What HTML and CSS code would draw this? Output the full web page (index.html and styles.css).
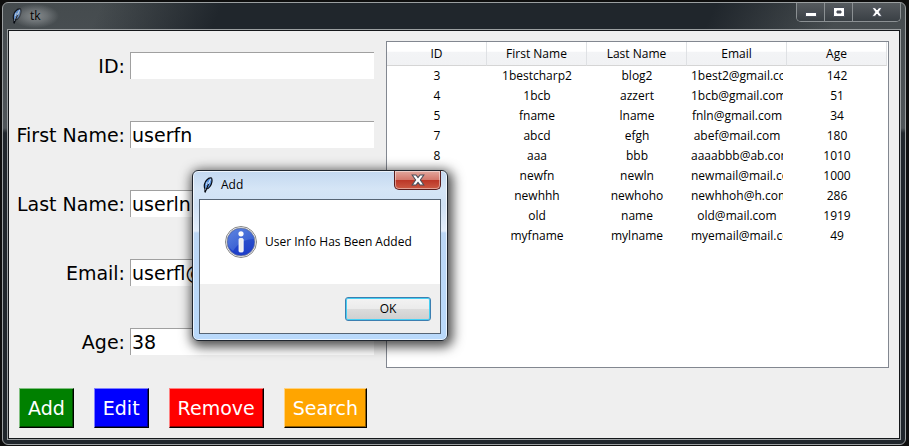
FILE: index.html
```html
<!DOCTYPE html>
<html lang="en">
<head>
<meta charset="utf-8">
<title>tk</title>
<link rel="stylesheet" href="styles.css">
</head>
<body>
<svg width="0" height="0" class="defs" aria-hidden="true">
  <defs>
    <linearGradient id="ball" x1="0" y1="0" x2="0" y2="1"><stop offset="0" stop-color="#2f58cc"/><stop offset="1" stop-color="#1c3cc8"/></linearGradient>
    <linearGradient id="gloss" x1="0" y1="0" x2="1" y2="1"><stop offset="0" stop-color="#7fa4ee"/><stop offset="1" stop-color="#2f5ad0"/></linearGradient>
    <symbol id="feather" viewBox="0 0 16 16">
      <path d="M5 15 5 12C3.500 9 4.500 5 7 2.800 8 1.500 10 .6 11.500 1 12.600 3 11.800 7 10 9.500 9 11 7.500 12 6 12Z" fill="#5b93dc" stroke="#0a0d14" stroke-width="1.200"/>
      <path d="M10.800 1.800 5.300 13M9.800 3.500 9 6M6.500 8 7 5" stroke="#cfe2fb" stroke-width=".9" fill="none"/>
      <path d="M8.500 7 5 15.500" stroke="#0a0d14" stroke-width="1.200"/>
    </symbol>
    <symbol id="cross" viewBox="0 0 12 10">
      <path d="M1 .7H4.200L6 3 7.800.7H11L8 5 11 9.300H7.800L6 7 4.200 9.300H1L4 5Z" fill="#fff" stroke="#4a4f5a" stroke-width=".9"/>
    </symbol>
  </defs>
</svg>
<main class="window">
  <header class="titlebar">
    <svg class="feather" aria-hidden="true"><use href="#feather"/></svg>
    <h1 class="title">tk</h1>
    <div class="caption">
      <button type="button" class="cap" aria-label="Minimize"><svg width="12" height="10" viewBox="0 0 12 10"><rect x=".5" y="5.500" width="11" height="4" fill="#fff" stroke="#4a4f5a"/></svg></button>
      <button type="button" class="cap" aria-label="Maximize"><svg width="12" height="10" viewBox="0 0 12 10"><path d="M.5.5H11.500V9.500H.5ZM4 4V6H8V4Z" fill="#fff" fill-rule="evenodd" stroke="#4a4f5a"/></svg></button>
      <button type="button" class="cap cap-close" aria-label="Close"><svg width="12" height="10"><use href="#cross"/></svg></button>
    </div>
  </header>
  <div class="client">
    <form class="form">
      <div class="fields">
        <label for="id">ID:</label><input id="id" type="text">
        <label for="fn">First Name:</label><input id="fn" type="text" value="userfn">
        <label for="ln">Last Name:</label><input id="ln" type="text" value="userln">
        <label for="email">Email:</label><input id="email" type="text" value="userfl@">
        <label for="age">Age:</label><input id="age" type="text" value="38">
      </div>
      <div class="actions">
        <button type="button" class="btn add">Add</button>
        <button type="button" class="btn edit">Edit</button>
        <button type="button" class="btn remove">Remove</button>
        <button type="button" class="btn search">Search</button>
      </div>
    </form>
    <div class="tree">
      <table>
        <thead><tr><th>ID</th><th>First Name</th><th>Last Name</th><th>Email</th><th>Age</th></tr></thead>
        <tbody>
          <tr><td>3</td><td>1bestcharp2</td><td>blog2</td><td><div class="clip">1best2@gmail.com</div></td><td>142</td></tr>
          <tr><td>4</td><td>1bcb</td><td>azzert</td><td><div class="clip">1bcb@gmail.com</div></td><td>51</td></tr>
          <tr><td>5</td><td>fname</td><td>lname</td><td><div class="clip">fnln@gmail.com</div></td><td>34</td></tr>
          <tr><td>7</td><td>abcd</td><td>efgh</td><td><div class="clip">abef@mail.com</div></td><td>180</td></tr>
          <tr><td>8</td><td>aaa</td><td>bbb</td><td><div class="clip">aaaabbb@ab.com</div></td><td>1010</td></tr>
          <tr><td></td><td>newfn</td><td>newln</td><td><div class="clip">newmail@mail.com</div></td><td>1000</td></tr>
          <tr><td></td><td>newhhh</td><td>newhoho</td><td><div class="clip">newhhoh@h.com</div></td><td>286</td></tr>
          <tr><td></td><td>old</td><td>name</td><td><div class="clip">old@mail.com</div></td><td>1919</td></tr>
          <tr><td></td><td>myfname</td><td>mylname</td><td><div class="clip">myemail@mail.com</div></td><td>49</td></tr>
        </tbody>
      </table>
    </div>
  </div>
</main>
<section class="dialog" role="dialog" aria-labelledby="dlg-title">
  <header class="dialog-bar">
    <svg class="feather" aria-hidden="true"><use href="#feather"/></svg>
    <h2 class="title" id="dlg-title">Add</h2>
    <button type="button" class="dialog-close" aria-label="Close dialog"><svg width="14" height="12"><use href="#cross"/></svg></button>
  </header>
  <div class="dialog-client">
    <div class="message">
      <svg width="32" height="32" viewBox="0 0 32 32" aria-hidden="true">
        <circle cx="16" cy="16" r="15.500" fill="#fff" stroke="#858585"/>
        <circle cx="16" cy="16" r="14" fill="url(#ball)" stroke="#8d8f98" stroke-width=".8"/>
        <path d="M2.800 17A13.300 13.300 0 0 1 29 13C20 13 13 17 8 25 5 23 3 20 2.800 17Z" fill="url(#gloss)" opacity=".6"/>
        <circle cx="16" cy="7.800" r="2.600" fill="#fff"/>
        <rect x="14" y="12.500" width="4.200" height="13.500" rx="1" fill="#ededed" stroke="#fff" stroke-width=".8"/>
      </svg>
      <p>User Info Has Been Added</p>
    </div>
    <div class="dialog-foot"><button type="button" class="ok">OK</button></div>
  </div>
</section>
</body>
</html>
```
FILE: styles.css
```css
* { box-sizing: border-box; }
body {
  margin: 0;
  min-height: 100vh;
  padding: 2px 3px 1px 2px;
  display: flex;
  background: #0e0e0e;
  color: #000;
  font: 12px/16px "Open Sans", "Noto Sans", sans-serif;
  position: relative;
}
.defs { position: absolute; }
h1, h2, p { margin: 0; font-size: 12px; font-weight: 400; }
button { font: inherit; padding: 0; }

.window {
  flex: 1;
  display: flex;
  flex-direction: column;
  padding: 0 4px 4px;
  border: 1px solid #9b9fa1;
  border-radius: 6px;
  background:
    linear-gradient(115deg, transparent 0 90px, #20262c 200px, #20262c 78%, transparent 92%) top / 100% 27px no-repeat,
    linear-gradient(#454b4e 0, #50565a 125px, #20262c 130px, #20262c);
}
.titlebar { height: 26px; display: flex; align-items: center; padding-left: 2px; }
.feather { width: 16px; height: 16px; flex: none; }
.titlebar .title {
  padding: 4px 18px;
  margin-left: -13px;
  background: radial-gradient(closest-side, #858a8c, #7d8285aa 50%, transparent);
}
.caption {
  align-self: flex-start;
  margin-left: auto;
  display: flex;
  border: 1px solid #8b9093;
  border-top: 0;
  border-radius: 0 0 5px 5px;
  overflow: hidden;
}
.cap {
  width: 28px;
  height: 18px;
  border: 0;
  border-right: 1px solid #8b9093;
  background: linear-gradient(#565b5f, #3a4045);
  display: grid;
  place-items: center;
}
.cap-close { width: 47px; border-right: 0; }

.client {
  flex: 1;
  display: flex;
  gap: 12px;
  padding: 10px 10px 9px 5px;
  border: 1px solid #14171a;
  outline: 1px solid #9b9fa1;
  margin: 1px;
  background: #efefef;
}
.form {
  width: 360px;
  flex: none;
  display: flex;
  flex-direction: column;
  gap: 33px;
  padding-top: 11px;
  font: 19px/24px "DejaVu Sans", Verdana, sans-serif;
}
.fields {
  display: grid;
  grid-template-columns: 111px 1fr;
  gap: 42px 5px;
  align-items: center;
}
.fields label { text-align: right; white-space: nowrap; justify-self: end; }
.fields input {
  width: 100%;
  height: 27px;
  padding: 0 1px;
  border: solid #a0a0a0;
  border-width: 1px 0 0 1px;
  background: #fff;
  font: inherit;
}
.actions { display: flex; gap: 20px; padding-left: 5px; }
.btn {
  height: 40px;
  padding: 0 8px;
  border: 1px solid #000;
  border-top-color: #ffffff80;
  border-left-color: #ffffff80;
  color: #fff;
  box-shadow: inset -1px -1px #00000070;
}
.add { background-color: #008000; }
.edit { background-color: #0000ff; }
.remove { background-color: #ff0000; }
.search { background-color: #ffa500; }

.tree {
  flex: 1;
  margin-bottom: 61px;
  padding-right: 1px;
  border: 1px solid #828790;
  background: #fff;
}
table { width: 100%; table-layout: fixed; border-collapse: separate; border-spacing: 0; text-align: center; }
th {
  height: 24px;
  padding: 0;
  font-weight: 400;
  border-right: 1px solid #dfe1e4;
  border-bottom: 1px solid #d5d5d5;
  background: linear-gradient(#fff 40%, #f3f4f6 45%, #f1f2f4);
}
td { height: 20px; padding: 0 4px; }
.clip { overflow: hidden; white-space: nowrap; }

.dialog {
  position: absolute;
  left: 192px;
  top: 170px;
  width: 256px;
  padding: 0 6px 6px;
  border: 1px solid #20262e;
  border-radius: 6px;
  background: linear-gradient(#c3d8f0, #d5e5f6 18px, #cfe1f5 34px, #e3eefb 60px, #bcd7f5 62px, #b9d9fb);
  box-shadow: inset 0 0 0 1px #ffffffb0, 2px 3px 12px 3px #000000b0;
}
.dialog-bar { height: 28px; display: flex; align-items: center; padding-left: 1px; gap: 5px; }
.dialog-close {
  align-self: flex-start;
  margin-left: auto;
  width: 47px;
  height: 19px;
  border: 1px solid #5a1d1d;
  border-top: 0;
  border-radius: 0 0 5px 5px;
  background: linear-gradient(#e2a79d, #d4796c 48%, #bb3526 50%, #cc5a44);
  box-shadow: inset 0 0 0 1px #ffffff70;
  display: grid;
  place-items: center;
}
.dialog-client { border: 1px solid #566474; background: #efefef; }
.message {
  height: 84px;
  padding-left: 25px;
  display: flex;
  align-items: center;
  gap: 8px;
  background: #fff;
}
.dialog-foot { display: flex; justify-content: flex-end; padding: 13px 9px 12px; }
.ok {
  width: 86px;
  height: 24px;
  border: 1px solid #3c7fb1;
  border-radius: 3px;
  background: linear-gradient(#f3f3f3, #ebebeb 48%, #dcdcdc 50%, #cfcfcf);
  box-shadow: inset 0 0 0 1px #46d0f4;
}
```
